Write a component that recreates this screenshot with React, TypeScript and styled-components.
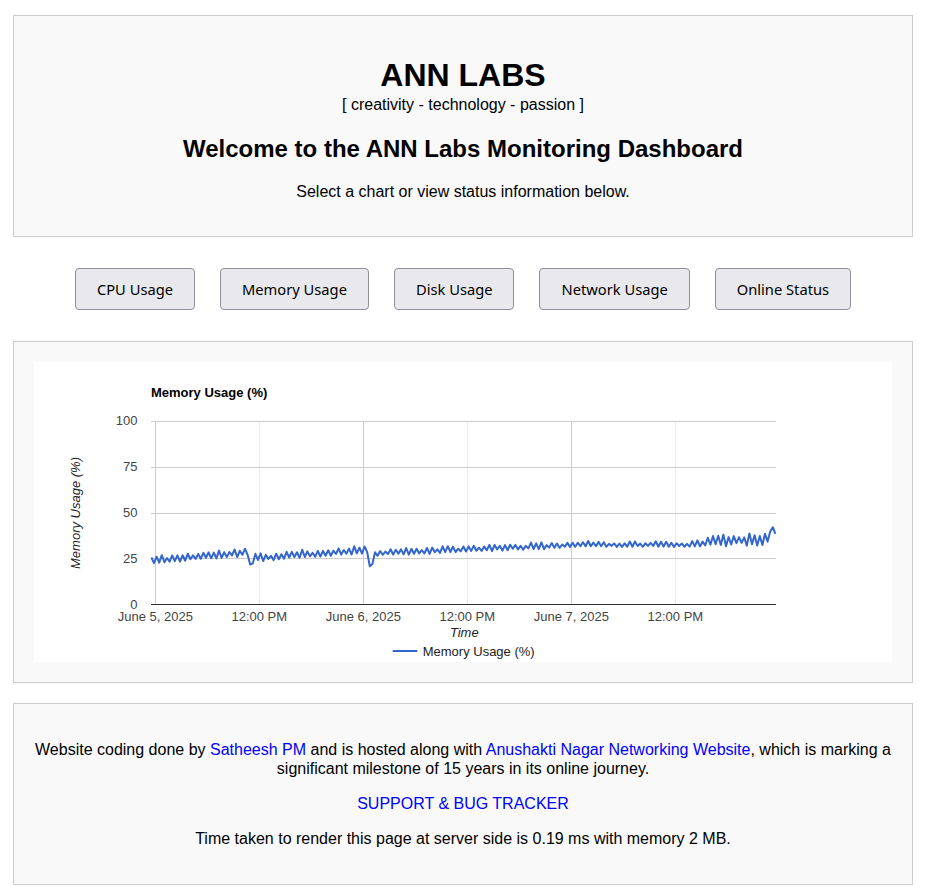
import * as React from "react";
import styled, { createGlobalStyle } from "styled-components";

const GlobalStyle = createGlobalStyle`
  html, body {
    margin: 0;
    padding: 0;
    background: #ffffff;
    font-family: "Liberation Sans", Arial, sans-serif;
    color: #000;
  }
`;

const Page = styled.div`
  width: 900px;
  padding: 15px 0 0 13px;
`;

const Panel = styled.section`
  background: #f9f9f9;
  border: 1px solid #cccccc;
  padding: 20px;
  text-align: center;
`;

const Brand = styled.h1`
  font-size: 32px;
  line-height: 37px;
  font-weight: 700;
  margin: 21px 0 0;
`;

const Tagline = styled.div`
  font-size: 16px;
  line-height: 18px;
  margin-top: 2px;
`;

const Welcome = styled.h2`
  font-size: 24px;
  line-height: 28px;
  font-weight: 700;
  margin: 21px 0 0;
`;

const Lead = styled.p`
  font-size: 16px;
  line-height: 18px;
  margin: 20px 0 15px;
`;

const Toolbar = styled.nav`
  display: flex;
  justify-content: center;
  gap: 25px;
  margin: 31px 0;
`;

const TabButton = styled.button`
  font-family: "Noto Sans", "Open Sans", sans-serif;
  font-size: 14.7px;
  line-height: 20px;
  color: #000;
  background: #e9e9ed;
  border: 1px solid #8f8f9d;
  border-radius: 4px;
  padding: 10px 21px;
  cursor: pointer;
`;

const ChartPanel = styled(Panel)`
  padding: 20px;
`;

const ChartCard = styled.div`
  background: #ffffff;
  height: 300px;
  text-align: left;
`;

const Footer = styled(Panel)`
  font-size: 16px;
  line-height: 19px;
  margin-top: 20px;
`;

const Note = styled.p`
  margin: 16px 0;
`;

const Link = styled.a`
  color: #0000ff;
  text-decoration: none;
`;

// seeded noise so the series is stable between renders
function mulberry32(seed: number) {
  let a = seed;
  return () => {
    a |= 0;
    a = (a + 0x6d2b79f5) | 0;
    let t = Math.imul(a ^ (a >>> 15), 1 | a);
    t = (t + Math.imul(t ^ (t >>> 7), 61 | t)) ^ t;
    return ((t ^ (t >>> 14)) >>> 0) / 4294967296;
  };
}

const PLOT = { left: 117, right: 742, top: 58.7, bottom: 242.3 };
const xOf = (h: number) => 121.3 + h * 8.667;
const yOf = (v: number) => PLOT.bottom - v * 1.836;

function buildSeries(): string {
  const rand = mulberry32(11);
  const pts: string[] = [];
  let i = 0;
  for (let h = -0.45; h <= 71.55; h += 0.3, i++) {
    let base: number;
    let amp: number;
    if (h < 10.85) {
      base = 23.5 + ((h + 0.45) / 11.3) * 4.5;
      amp = 2.8;
    } else if (h < 24.7) {
      base = 24.5 + ((h - 10.85) / 13.85) * 5;
      amp = 2.8;
    } else if (h < 48) {
      base = 27.5 + ((h - 24.7) / 23.3) * 4.5;
      amp = 2.3;
    } else if (h < 62) {
      base = 32.3;
      amp = 2;
    } else {
      const t = (h - 62) / 9.6;
      base = 32.8 + t * 3;
      amp = 2.4 + t * 4;
    }
    const up = i % 2 === 0;
    const spike = rand();
    let v = up ? base + amp * (0.3 + spike * 0.8) : base - amp * (0.2 + spike * 0.4);
    if (h >= 10.85 && h < 11.5) v = 21.5 + (h - 10.85) * 2;
    if (h >= 24.7 && h < 25.3) v = 20.5 + (h - 24.7) * 4;
    if (h > 71.0 && h < 71.3) v = 42;
    pts.push(`${xOf(h).toFixed(1)},${yOf(v).toFixed(1)}`);
  }
  return pts.join(" ");
}

const axisText = { fontFamily: "Liberation Sans, Arial, sans-serif", fontSize: 13 };

const MemoryChart: React.FC = () => {
  const series = React.useMemo(buildSeries, []);
  const hLines = [25, 50, 75, 100];
  const vLines = [
    { h: 0, major: true, label: "June 5, 2025" },
    { h: 12, major: false, label: "12:00 PM" },
    { h: 24, major: true, label: "June 6, 2025" },
    { h: 36, major: false, label: "12:00 PM" },
    { h: 48, major: true, label: "June 7, 2025" },
    { h: 60, major: false, label: "12:00 PM" },
  ];
  return (
    <svg width="857" height="300" style={{ display: "block" }}>
      <text x={117} y={34.5} {...axisText} fontWeight="bold" fill="#000">
        Memory Usage (%)
      </text>
      {vLines.map(l => (
        <line
          key={l.h}
          x1={Math.round(xOf(l.h)) + 0.5}
          x2={Math.round(xOf(l.h)) + 0.5}
          y1={PLOT.top}
          y2={PLOT.bottom}
          stroke={l.major ? "#cccccc" : "#ebebeb"}
          strokeWidth={1}
        />
      ))}
      {hLines.map(v => (
        <line
          key={v}
          x1={PLOT.left}
          x2={PLOT.right}
          y1={Math.round(yOf(v)) + 0.5}
          y2={Math.round(yOf(v)) + 0.5}
          stroke="#cccccc"
          strokeWidth={1}
        />
      ))}
      {[0, ...hLines].map(v => (
        <text key={v} x={103.5} y={yOf(v) + 4.6} textAnchor="end" {...axisText} fill="#444">
          {v}
        </text>
      ))}
      {vLines.map(l => (
        <text key={l.h} x={xOf(l.h)} y={259} textAnchor="middle" {...axisText} fill="#444">
          {l.label}
        </text>
      ))}
      <polyline points={series} fill="none" stroke="#3366cc" strokeWidth={2} strokeLinejoin="round" />
      <line x1={PLOT.left} x2={PLOT.right} y1={242.5} y2={242.5} stroke="#333333" strokeWidth={1} />
      <text x={430.3} y={275.3} textAnchor="middle" {...axisText} fontStyle="italic" fill="#222">
        Time
      </text>
      <text
        x={46}
        y={151}
        transform="rotate(-90 46 151)"
        textAnchor="middle"
        {...axisText}
        fontStyle="italic"
        fill="#222"
      >
        Memory Usage (%)
      </text>
      <line x1={358.7} x2={383.3} y1={289} y2={289} stroke="#3366cc" strokeWidth={2} />
      <text x={388.7} y={293.5} {...axisText} fill="#222">
        Memory Usage (%)
      </text>
    </svg>
  );
};

const tabs = ["CPU Usage", "Memory Usage", "Disk Usage", "Network Usage", "Online Status"];

export default function App() {
  return (
    <Page>
      <GlobalStyle />
      <Panel>
        <Brand>ANN LABS</Brand>
        <Tagline>[ creativity - technology - passion ]</Tagline>
        <Welcome>Welcome to the ANN Labs Monitoring Dashboard</Welcome>
        <Lead>Select a chart or view status information below.</Lead>
      </Panel>
      <Toolbar>
        {tabs.map(t => (
          <TabButton key={t}>{t}</TabButton>
        ))}
      </Toolbar>
      <ChartPanel>
        <ChartCard>
          <MemoryChart />
        </ChartCard>
      </ChartPanel>
      <Footer>
        <Note>
          Website coding done by <Link href="#">Satheesh PM</Link> and is hosted along with{" "}
          <Link href="#">Anushakti Nagar Networking Website</Link>, which is marking a significant
          milestone of 15 years in its online journey.
        </Note>
        <Note>
          <Link href="#">SUPPORT &amp; BUG TRACKER</Link>
        </Note>
        <Note>Time taken to render this page at server side is 0.19 ms with memory 2 MB.</Note>
      </Footer>
    </Page>
  );
}
